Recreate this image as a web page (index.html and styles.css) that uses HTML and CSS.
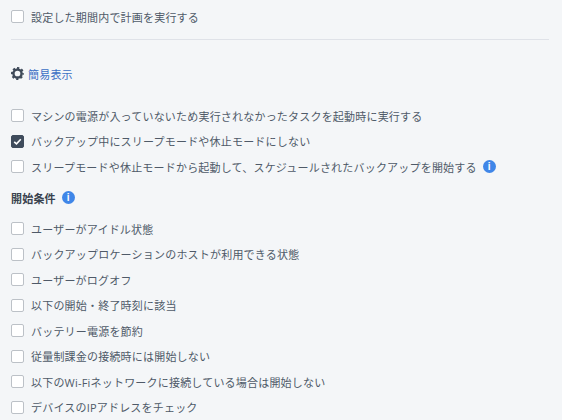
FILE: index.html
```html
<!DOCTYPE html>
<html lang="ja">
<head>
<meta charset="utf-8">
<title>設定</title>
<link rel="stylesheet" href="styles.css">
</head>
<body>
<main class="page">
  <label class="row"><span class="box"></span><span>設定した期間内で計画を実行する</span></label>
  <hr class="rule">
  <a class="simple" href="#">
    <svg class="gear" viewBox="0 0 24 24" width="13" height="13"><circle cx="12" cy="12" r="7.500" fill="none" stroke="#3f4a59" stroke-width="4.500"/><circle cx="12" cy="12" r="10" fill="none" stroke="#3f4a59" stroke-width="4" stroke-dasharray="4 3.854" stroke-dashoffset="2"/></svg>
    <span>簡易表示</span>
  </a>
  <section class="group">
    <label class="row"><span class="box"></span><span>マシンの電源が入っていないため実行されなかったタスクを起動時に実行する</span></label>
    <label class="row"><span class="box checked"><svg viewBox="0 0 13 13" width="13" height="13"><path d="M3.200 6.800l2.300 2.100 4.300-4.600" fill="none" stroke="#fff" stroke-width="1.600"/></svg></span><span>バックアップ中にスリープモードや休止モードにしない</span></label>
    <label class="row"><span class="box"></span><span>スリープモードや休止モードから起動して、スケジュールされたバックアップを開始する</span><span class="info tight">i</span></label>
  </section>
  <h2 class="heading"><span>開始条件</span><span class="info">i</span></h2>
  <section class="conditions">
    <label class="row"><span class="box"></span><span>ユーザーがアイドル状態</span></label>
    <label class="row"><span class="box"></span><span>バックアップロケーションのホストが利用できる状態</span></label>
    <label class="row"><span class="box"></span><span>ユーザーがログオフ</span></label>
    <label class="row"><span class="box"></span><span>以下の開始・終了時刻に該当</span></label>
    <label class="row"><span class="box"></span><span>バッテリー電源を節約</span></label>
    <label class="row"><span class="box"></span><span>従量制課金の接続時には開始しない</span></label>
    <label class="row"><span class="box"></span><span>以下のWi-Fiネットワークに接続している場合は開始しない</span></label>
    <label class="row"><span class="box"></span><span>デバイスのIPアドレスをチェック</span></label>
  </section>
</main>
</body>
</html>
```
FILE: styles.css
```css
html, body {
  margin: 0;
  height: 100%;
  overflow: hidden;
  background: #f4f6f8;
}
.page {
  padding: 4px 13px 0 11px;
  font-family: "Open Sans", "Noto Sans CJK JP", sans-serif;
  font-size: 11px;
  letter-spacing: 0.2px;
  color: #4f5a68;
}
.row {
  display: flex;
  align-items: center;
  gap: 7px;
  height: 25.5px;
}
.box {
  flex: none;
  width: 11px;
  height: 11px;
  border: 1px solid #bcc1c7;
  border-radius: 2px;
  background: #fff;
  position: relative;
}
.box.checked {
  background: #3f4c5c;
  border-color: #3f4c5c;
}
.box.checked svg {
  position: absolute;
  left: -1px;
  top: -1px;
}
.rule {
  margin: 9px 0 0;
  border: 0;
  border-top: 1px solid #dfe2e8;
}
.simple {
  display: flex;
  align-items: center;
  gap: 4px;
  margin-top: 25px;
  height: 18px;
  color: #3b6fc4;
  text-decoration: none;
}
.group {
  margin-top: 20.4px;
}
.info {
  flex: none;
  width: 13px;
  height: 13px;
  margin-left: 6px;
  border-radius: 50%;
  background: #3f86e8;
  color: #fff;
  font: 700 10px/13px "Liberation Sans", sans-serif;
  text-align: center;
}
.info.tight {
  margin-left: -1px;
}
.heading {
  display: flex;
  align-items: center;
  margin: 8.500px 0 8px;
  height: 20px;
  font-size: 11px;
  font-weight: 700;
  color: #39424e;
}
```
